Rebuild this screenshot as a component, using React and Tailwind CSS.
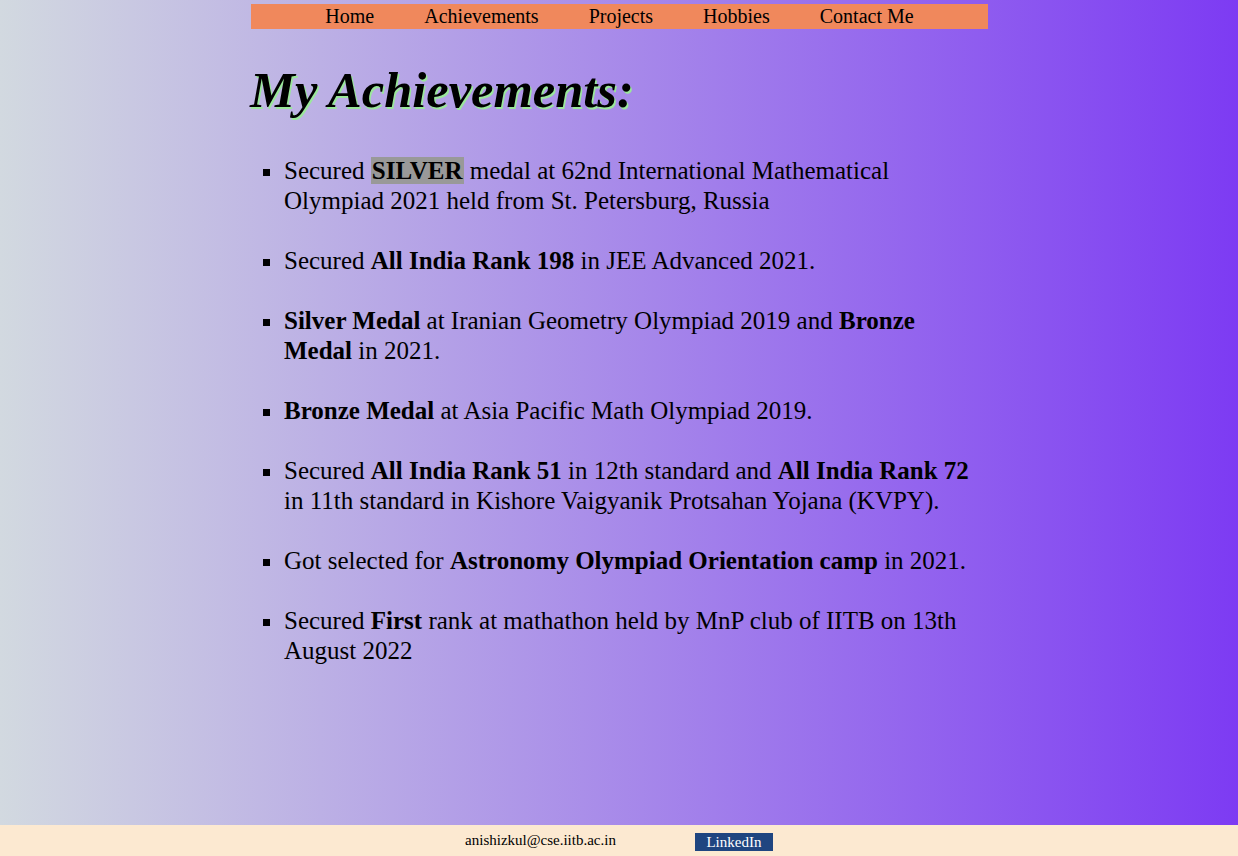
import React from "react";

const items = [
  <>Secured <b className="bg-[#999999] px-[1px]">SILVER</b> medal at 62nd International Mathematical Olympiad 2021 held from St. Petersburg, Russia</>,
  <>Secured <b>All India Rank 198</b> in JEE Advanced 2021.</>,
  <><b>Silver Medal</b> at Iranian Geometry Olympiad 2019 and <b>Bronze Medal</b> in 2021.</>,
  <><b>Bronze Medal</b> at Asia Pacific Math Olympiad 2019.</>,
  <>Secured <b>All India Rank 51</b> in 12th standard and <b>All India Rank 72</b> in 11th standard in Kishore Vaigyanik Protsahan Yojana (KVPY).</>,
  <>Got selected for <b>Astronomy Olympiad Orientation camp</b> in 2021.</>,
  <>Secured <b>First</b> rank at mathathon held by MnP club of IITB on 13th August 2022</>,
];

export default function App() {
  return (
    <div className="min-h-screen flex flex-col font-['Liberation_Serif',serif] text-black">
      <main className="flex-1 bg-[linear-gradient(to_right,#d2d9e0,#7d3bf3)]">
        <div className="w-[737px] ml-[251px] pt-[4px]">
          <nav className="h-[25px] bg-[#f0885c] flex justify-center items-center text-[20px] leading-[25px]">
            {["Home", "Achievements", "Projects", "Hobbies", "Contact Me"].map((n) => (
              <span key={n} className="px-[25px]">{n}</span>
            ))}
          </nav>
          <h1 className="mt-[34px] ml-[-1px] text-[50.5px] leading-[1.107] font-bold italic [text-shadow:1.5px_1.5px_0_#9be79b]">
            My Achievements:
          </h1>
          <ul className="mt-[37px] pl-[33px] list-[square] text-[25px] leading-[30px]">
            {items.map((it, i) => (
              <li key={i} className="mb-[30px]">{it}</li>
            ))}
          </ul>
        </div>
      </main>
      <footer className="h-[31px] bg-[#fce9d1] flex justify-center items-center gap-[79px] text-[15px]">
        <span>anishizkul@cse.iitb.ac.in</span>
        <span className="bg-[#1f4580] text-white w-[78px] h-[18px] flex items-center justify-center mt-[3px] leading-[18px]">LinkedIn</span>
      </footer>
    </div>
  );
}
